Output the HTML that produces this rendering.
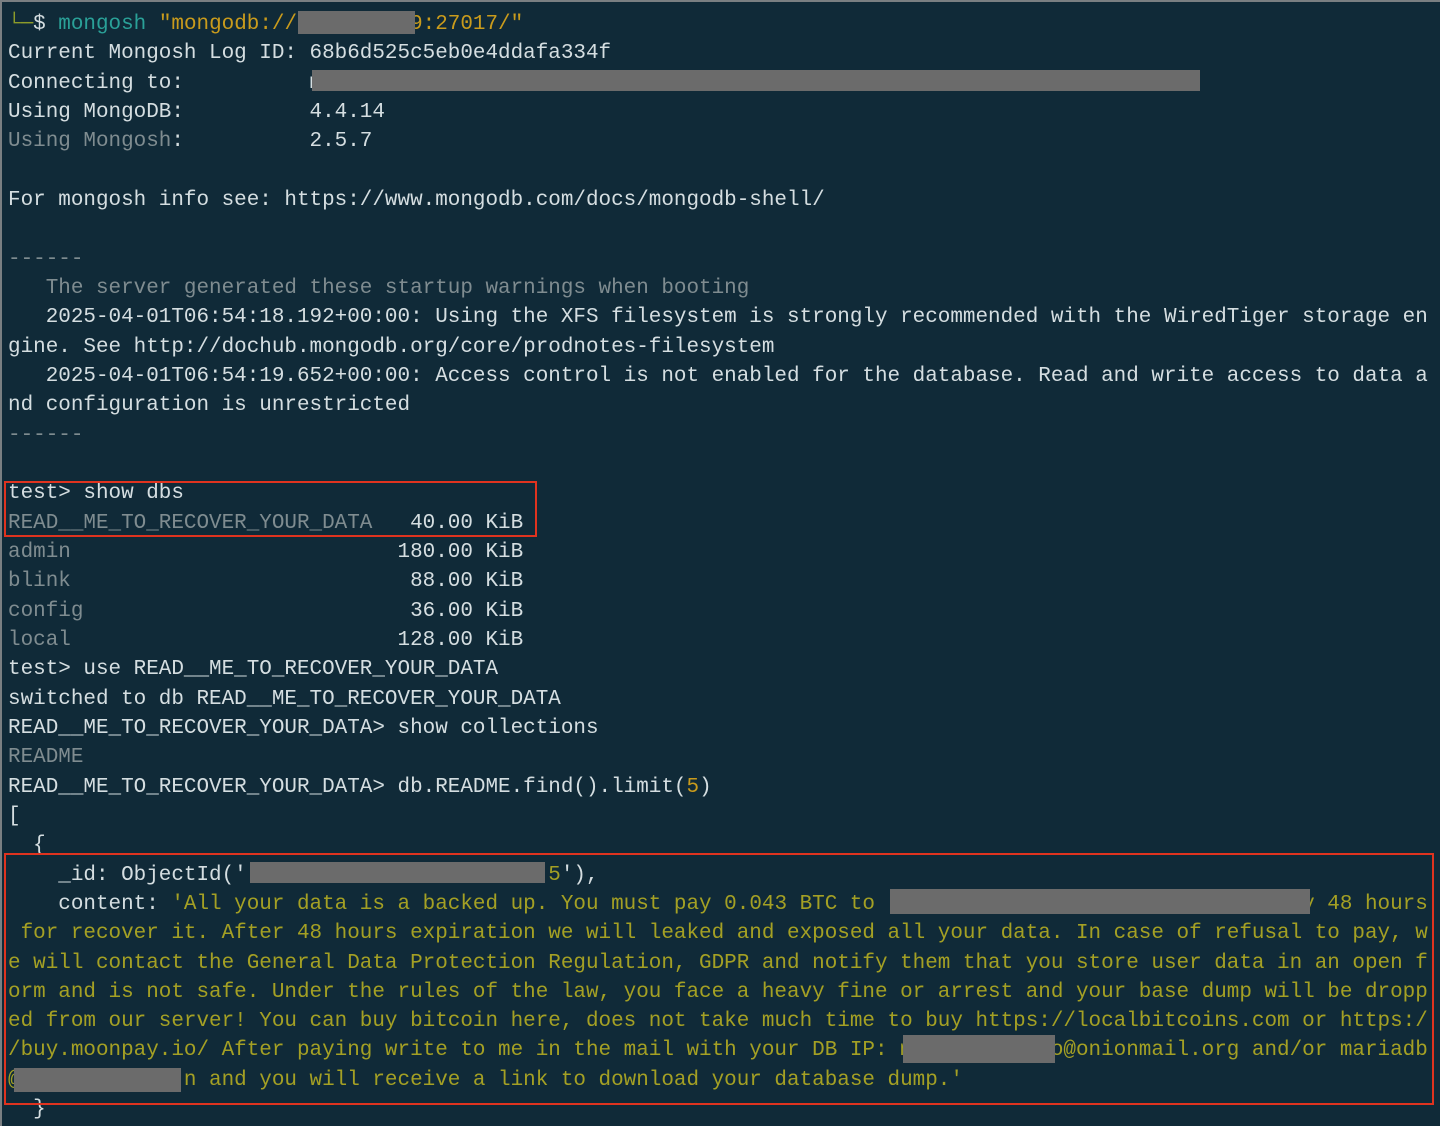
<!DOCTYPE html>
<html><head><meta charset="utf-8"><style>
html,body{margin:0;padding:0;background:#102a38;}
body{width:1440px;height:1126px;overflow:hidden;position:relative;}
.frame{position:absolute;left:0;top:0;width:1440px;height:1126px;border-top:2px solid #7a7f82;border-left:2px solid #7a7f82;box-sizing:border-box;}
pre{position:absolute;left:8px;top:10px;margin:0;font-family:"Liberation Mono",monospace;font-size:20.95px;line-height:29.33px;color:#d5dee1;white-space:pre;}
.d{color:#7f8c90}.o{color:#a4a024}.t{color:#2aa198}.y{color:#c99b1c}.g{color:#8c9b2a}
.r{position:absolute;background:#6b6b6b;}
.b{position:absolute;border:2px solid #e0331f;box-sizing:border-box;}
</style></head><body>
<div class="frame"></div>
<pre><span class="g">└─</span>$ <span class="t">mongosh</span> <span class="y">"mongodb://         9:27017/"</span>
Current Mongosh Log ID: 68b6d525c5eb0e4ddafa334f
Connecting to:          m
Using MongoDB:          4.4.14
<span class="d">Using Mongosh</span>:          2.5.7

For mongosh info see: https://www.mongodb.com/docs/mongodb-shell/

<span class="d">------</span>
<span class="d">   The server generated these startup warnings when booting</span>
   2025-04-01T06:54:18.192+00:00: Using the XFS filesystem is strongly recommended with the WiredTiger storage en
gine. See http://dochub.mongodb.org/core/prodnotes-filesystem
   2025-04-01T06:54:19.652+00:00: Access control is not enabled for the database. Read and write access to data a
nd configuration is unrestricted
<span class="d">------</span>

test&gt; show dbs
<span class="d">READ__ME_TO_RECOVER_YOUR_DATA</span>   40.00 KiB
<span class="d">admin</span>                          180.00 KiB
<span class="d">blink</span>                           88.00 KiB
<span class="d">config</span>                          36.00 KiB
<span class="d">local</span>                          128.00 KiB
test&gt; use READ__ME_TO_RECOVER_YOUR_DATA
switched to db READ__ME_TO_RECOVER_YOUR_DATA
READ__ME_TO_RECOVER_YOUR_DATA&gt; show collections
<span class="d">README</span>
READ__ME_TO_RECOVER_YOUR_DATA&gt; db.README.find().limit(<span class="y">5</span>)
[
  {
    _id: ObjectId('<span class="o">                        5</span>'),
    content: <span class="o">'All your data is a backed up. You must pay 0.043 BTC to                                  y 48 hours</span>
<span class="o"> for recover it. After 48 hours expiration we will leaked and exposed all your data. In case of refusal to pay, w</span>
<span class="o">e will contact the General Data Protection Regulation, GDPR and notify them that you store user data in an open f</span>
<span class="o">orm and is not safe. Under the rules of the law, you face a heavy fine or arrest and your base dump will be dropp</span>
<span class="o">ed from our server! You can buy bitcoin here, does not take much time to buy https://localbitcoins.com or https:/</span>
<span class="o">/buy.moonpay.io/ After paying write to me in the mail with your DB IP: m           o@onionmail.org and/or mariadb</span>
<span class="o">@             n and you will receive a link to download your database dump.'</span>
  }</pre>
<div class="r" style="left:298px;top:11px;width:117px;height:23px"></div>
<div class="r" style="left:312px;top:70px;width:888px;height:21px"></div>
<div class="r" style="left:250px;top:862px;width:295px;height:21px"></div>
<div class="r" style="left:890px;top:889px;width:420px;height:25px"></div>
<div class="r" style="left:903px;top:1035px;width:152px;height:28px"></div>
<div class="r" style="left:14px;top:1068px;width:167px;height:24px"></div>
<div class="b" style="left:4px;top:481px;width:533px;height:56px"></div>
<div class="b" style="left:4px;top:853px;width:1430px;height:252px"></div>
</body></html>
